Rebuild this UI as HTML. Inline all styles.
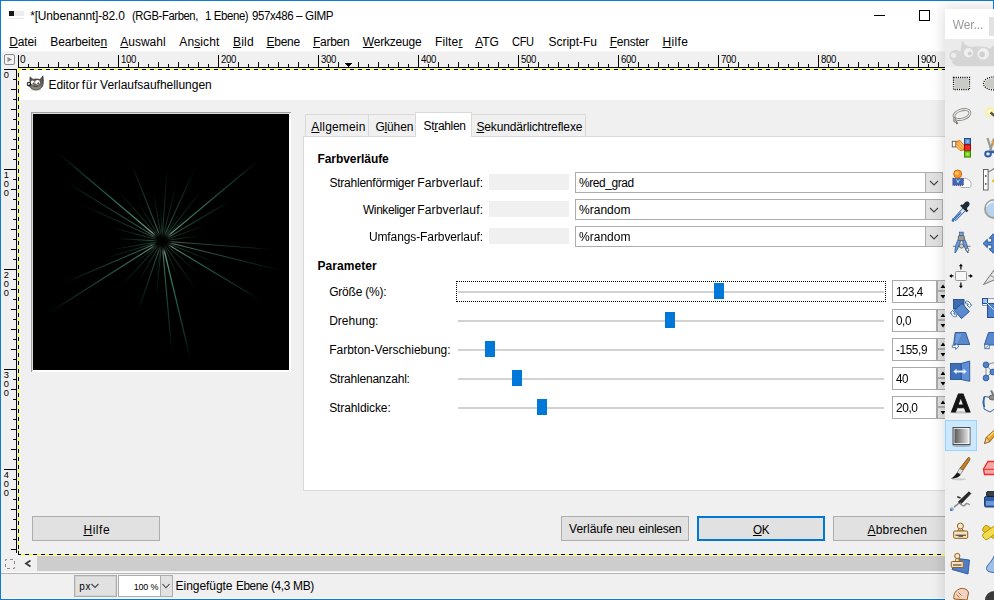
<!DOCTYPE html>
<html lang="de"><head><meta charset="utf-8"><title>GIMP – Editor für Verlaufsaufhellungen</title>
<style>
html,body{margin:0;padding:0;width:994px;height:600px;overflow:hidden;background:#fff;
 font-family:"Liberation Sans",sans-serif;font-size:12px;color:#000}
.a{position:absolute;box-sizing:border-box}
.t{position:absolute;white-space:nowrap;line-height:16px;z-index:5;transform-origin:0 50%}
.t u{text-decoration:underline}
svg{position:absolute;overflow:visible}
.btn{background:#e1e1e1;border:1px solid #adadad}
.hd{background-image:repeating-linear-gradient(90deg,#000 0,#000 4px,#ff0 4px,#ff0 8px)}
.vd{background-image:repeating-linear-gradient(180deg,#000 0,#000 4px,#ff0 4px,#ff0 8px)}
.trk{height:2px;background:#d2d2d2;left:458px;width:426px}
.thb{width:10px;height:16px;background:#0078d7}
.spin{left:892px;width:45px;height:23px;background:#fff;border:1px solid #ababab}
.cmb{left:575px;width:368px;height:21px;background:#fff;border:1px solid #adadad}
.cbt{left:925px;width:18px;height:21px;background:#e1e1e1;border:1px solid #adadad}
.gbx{left:489px;width:80px;height:16px;background:#f0f0f0}
</style></head><body>

<!-- main window frame -->
<div class="a" style="left:0;top:0;width:994px;height:1px;background:#0d7bd8"></div>
<div class="a" style="left:0;top:0;width:1px;height:600px;background:#0d7bd8"></div>
<div class="a" style="left:993px;top:0;width:1px;height:600px;background:#0d7bd8"></div>
<div class="a" style="left:0;top:599px;width:994px;height:1px;background:#0d7bd8"></div>
<!-- title icon + window buttons -->
<div class="a" style="left:9px;top:11px;width:15px;height:5px;background:#ededed"></div>
<div class="a" style="left:9px;top:11px;width:5px;height:5px;background:#161616"></div>
<div class="a" style="left:9px;top:18px;width:15px;height:1px;background:#e6e6e6"></div>
<div class="a" style="left:874px;top:15px;width:11px;height:1px;background:#000"></div>
<div class="a" style="left:919px;top:10px;width:11px;height:11px;border:1px solid #000"></div>
<!-- rulers -->
<div class="a" style="left:1px;top:51px;width:992px;height:18px;background:#f0f0f0"></div>
<div class="a" style="left:1px;top:51px;width:992px;height:1px;background:#f7f7f7"></div>
<div class="a" style="left:1px;top:69px;width:17px;height:486px;background:#f0f0f0"></div>
<svg width="994" height="600" style="left:0;top:0" shape-rendering="crispEdges">
 <path d="M18 67.5H994M18.5 55V67M28.5 64V67M38.5 62V67M48.5 64V67M58.5 62V67M68.5 64V67M78.5 62V67M88.5 64V67M98.5 62V67M108.5 64V67M118.5 55V67M128.5 64V67M138.5 62V67M148.5 64V67M158.5 62V67M168.5 64V67M178.5 62V67M188.5 64V67M198.5 62V67M208.5 64V67M218.5 55V67M228.5 64V67M238.5 62V67M248.5 64V67M258.5 62V67M268.5 64V67M278.5 62V67M288.5 64V67M298.5 62V67M308.5 64V67M318.5 55V67M328.5 64V67M338.5 62V67M348.5 64V67M358.5 62V67M368.5 64V67M378.5 62V67M388.5 64V67M398.5 62V67M408.5 64V67M418.5 55V67M428.5 64V67M438.5 62V67M448.5 64V67M458.5 62V67M468.5 64V67M478.5 62V67M488.5 64V67M498.5 62V67M508.5 64V67M518.5 55V67M528.5 64V67M538.5 62V67M548.5 64V67M558.5 62V67M568.5 64V67M578.5 62V67M588.5 64V67M598.5 62V67M608.5 64V67M618.5 55V67M628.5 64V67M638.5 62V67M648.5 64V67M658.5 62V67M668.5 64V67M678.5 62V67M688.5 64V67M698.5 62V67M708.5 64V67M718.5 55V67M728.5 64V67M738.5 62V67M748.5 64V67M758.5 62V67M768.5 64V67M778.5 62V67M788.5 64V67M798.5 62V67M808.5 64V67M818.5 55V67M828.5 64V67M838.5 62V67M848.5 64V67M858.5 62V67M868.5 64V67M878.5 62V67M888.5 64V67M898.5 62V67M908.5 64V67M918.5 55V67M928.5 64V67M938.5 62V67M948.5 64V67M958.5 62V67M968.5 64V67M978.5 62V67M988.5 64V67" stroke="#000" stroke-width="1" fill="none"/>
 <path d="M16.5 69V553M4 69.5H16M13 79.5H16M11 89.5H16M13 99.5H16M11 109.5H16M13 119.5H16M11 129.5H16M13 139.5H16M11 149.5H16M13 159.5H16M4 169.5H16M13 179.5H16M11 189.5H16M13 199.5H16M11 209.5H16M13 219.5H16M11 229.5H16M13 239.5H16M11 249.5H16M13 259.5H16M4 269.5H16M13 279.5H16M11 289.5H16M13 299.5H16M11 309.5H16M13 319.5H16M11 329.5H16M13 339.5H16M11 349.5H16M13 359.5H16M4 369.5H16M13 379.5H16M11 389.5H16M13 399.5H16M11 409.5H16M13 419.5H16M11 429.5H16M13 439.5H16M11 449.5H16M13 459.5H16M4 469.5H16M13 479.5H16M11 489.5H16M13 499.5H16M11 509.5H16M13 519.5H16M11 529.5H16M13 539.5H16M11 549.5H16" stroke="#000" stroke-width="1" fill="none"/>
 <path d="M344 62.5h9l-4.5 5z" fill="#000"/>
</svg>
<svg width="12" height="12" style="left:3px;top:53px">
 <rect x="1.5" y="1.5" width="10" height="10" rx="1.5" fill="#f4f4f4" stroke="#8c8c8c"/>
 <path d="M4.5 4L9 6.5L4.5 9z" fill="#8a8a8a"/>
</svg>
<!-- canvas: pasted dialog screenshot -->
<div class="a" style="left:18px;top:69px;width:975px;height:486px;background:#f0f0f0"></div>
<div class="a" style="left:19px;top:70px;width:974px;height:30px;background:#fff"></div>
<div class="a hd" style="left:18px;top:69px;width:975px;height:1px;background-position:-4px 0"></div>
<div class="a hd" style="left:18px;top:554px;width:975px;height:1px;background-position:-1px 0"></div>
<div class="a vd" style="left:18px;top:69px;width:1px;height:486px;background-position:0 -4px"></div>
<!-- bottom scrollbar + status -->
<div class="a" style="left:1px;top:555px;width:992px;height:44px;background:#f0f0f0"></div>
<div class="a" style="left:37px;top:556px;width:956px;height:15px;background:#cdcdcd"></div>
<div class="a" style="left:1px;top:572px;width:992px;height:1px;background:#fcfcfc"></div>
<div class="a" style="left:1px;top:573px;width:992px;height:1px;background:#b4b4b4"></div>
<div class="a" style="left:1px;top:598px;width:992px;height:1px;background:#fafafa"></div>
<svg width="40" height="20" style="left:0;top:555px">
 <rect x="5.5" y="4.5" width="9" height="9" fill="none" stroke="#8a8a8a" stroke-dasharray="3 3" stroke-dashoffset="1.5"/>
 <path d="M30.5 5.5L26 8.5L30.5 11.5" fill="none" stroke="#3c3c3c" stroke-width="1.8"/>
</svg>
<div class="a btn" style="left:74px;top:575px;width:43px;height:22px;box-shadow:inset 0 0 0 1px #d2d2d2"></div>
<div class="a" style="left:118px;top:575px;width:55px;height:22px;background:#fff;border:1px solid #adadad"></div>
<div class="a btn" style="left:160px;top:575px;width:13px;height:22px"></div>
<svg width="110" height="10" style="left:74px;top:581px">
 <path d="M17.5 3L21 6.5L24.5 3" fill="none" stroke="#444" stroke-width="1.1"/>
 <path d="M88.5 3L92 6.8L95.5 3" fill="none" stroke="#444" stroke-width="1.1"/>
</svg>
<svg width="20" height="18" style="left:25px;top:74px" viewBox="25 74 20 18"><defs><linearGradient id="wg" x1="0" y1="0" x2="0" y2="1"><stop offset="0" stop-color="#4a4744"/><stop offset=".55" stop-color="#66625a"/><stop offset="1" stop-color="#86827a"/></linearGradient></defs><ellipse cx="36" cy="90" rx="6" ry="1" fill="#000" opacity=".12"/><path d="M30.2 76.8C31 78 32 79 33.300 79.400C35 78.900 37.500 78.900 39.300 79.500C40.800 78.800 42 77.500 42.800 75.900C43.500 79 43.600 83.500 42.600 86C41.300 88.600 38.500 89.900 35.600 89.800C33 89.700 30.800 88.600 29.800 86.600L30 81.500C29.800 80 29.900 78.300 30.200 76.800z" fill="url(#wg)" stroke="#2e2c29" stroke-width=".7"/><path d="M32 87C34 88.700 38.500 88.700 41 86.500" stroke="#a39e92" stroke-width=".9" fill="none" opacity=".8"/><path d="M33.500 86.300h4.500" stroke="#3a3733" stroke-width=".6"/><circle cx="29" cy="84.100" r="2.300" fill="#1b1a19"/><circle cx="28.800" cy="83.900" r="1.150" fill="#e4e4e4"/><ellipse cx="32.700" cy="82.500" rx="1.900" ry="2" fill="#fff"/><ellipse cx="37.500" cy="82.300" rx="2.400" ry="2.300" fill="#fff"/><path d="M32.300 83.600L33.700 82.200L33.900 83.900z" fill="#000"/><path d="M37 83.600L38.600 82.100L38.800 84z" fill="#000"/></svg>
<div class="a" style="left:31px;top:112px;width:260px;height:260px;background:#fff"></div>
<div class="a" style="left:31px;top:112px;width:260px;height:1px;background:#a0a0a0"></div>
<div class="a" style="left:31px;top:112px;width:1px;height:260px;background:#a0a0a0"></div>
<div class="a" style="left:32px;top:113px;width:258px;height:1px;background:#dcdcdc"></div>
<div class="a" style="left:32px;top:113px;width:1px;height:258px;background:#dcdcdc"></div>
<div class="a" style="left:33px;top:114px;width:256px;height:256px;background:#000;overflow:hidden"><svg width="256" height="256" style="left:0;top:0" viewBox="0 0 256 256"><defs><linearGradient id="ry" x1="0" y1="0" x2="1" y2="0"><stop offset="0" stop-color="#cfeee0" stop-opacity="0"/><stop offset=".04" stop-color="#cfeee0" stop-opacity="0"/><stop offset=".1" stop-color="#a8dcc4" stop-opacity=".8"/><stop offset=".22" stop-color="#5fb892" stop-opacity=".8"/><stop offset=".5" stop-color="#34946c" stop-opacity=".72"/><stop offset=".8" stop-color="#226a4e" stop-opacity=".48"/><stop offset="1" stop-color="#12382a" stop-opacity="0"/></linearGradient><radialGradient id="hole"><stop offset="0" stop-color="#000" stop-opacity="1"/><stop offset=".45" stop-color="#000" stop-opacity=".9"/><stop offset="1" stop-color="#000" stop-opacity="0"/></radialGradient><filter id="bl" x="-2%" y="-2%" width="104%" height="104%"><feGaussianBlur stdDeviation=".4"/></filter></defs><g filter="url(#bl)" fill="url(#ry)"><rect x="0" y="-0.65" width="1" height="1.30" opacity="0.92" transform="translate(129 127) rotate(-139.8) scale(139 1)"/><rect x="0" y="-0.55" width="1" height="1.10" opacity="0.55" transform="translate(129 127) rotate(-148.4) scale(117 1)"/><rect x="0" y="-0.51" width="1" height="1.03" opacity="0.41" transform="translate(129 127) rotate(-155.7) scale(90 1)"/><rect x="0" y="-0.55" width="1" height="1.10" opacity="0.55" transform="translate(129 127) rotate(-111.5) scale(87 1)"/><rect x="0" y="-0.51" width="1" height="1.03" opacity="0.41" transform="translate(129 127) rotate(-86) scale(74 1)"/><rect x="0" y="-0.54" width="1" height="1.08" opacity="0.51" transform="translate(129 127) rotate(-65.6) scale(81 1)"/><rect x="0" y="-0.62" width="1" height="1.25" opacity="0.83" transform="translate(129 127) rotate(-39.9) scale(129 1)"/><rect x="0" y="-0.55" width="1" height="1.10" opacity="0.55" transform="translate(129 127) rotate(-30.4) scale(82 1)"/><rect x="0" y="-0.55" width="1" height="1.10" opacity="0.55" transform="translate(129 127) rotate(4.4) scale(115 1)"/><rect x="0" y="-0.59" width="1" height="1.18" opacity="0.69" transform="translate(129 127) rotate(13.9) scale(127 1)"/><rect x="0" y="-0.61" width="1" height="1.23" opacity="0.78" transform="translate(129 127) rotate(31) scale(118 1)"/><rect x="0" y="-0.64" width="1" height="1.27" opacity="0.87" transform="translate(129 127) rotate(76.5) scale(126 1)"/><rect x="0" y="-0.59" width="1" height="1.18" opacity="0.69" transform="translate(129 127) rotate(85) scale(114 1)"/><rect x="0" y="-0.54" width="1" height="1.08" opacity="0.51" transform="translate(129 127) rotate(108.8) scale(78 1)"/><rect x="0" y="-0.60" width="1" height="1.20" opacity="0.74" transform="translate(129 127) rotate(147.6) scale(139 1)"/><rect x="0" y="-0.57" width="1" height="1.15" opacity="0.64" transform="translate(129 127) rotate(156.8) scale(111 1)"/><rect x="0" y="-0.53" width="1" height="1.05" opacity="0.46" transform="translate(129 127) rotate(-177) scale(47 1)"/><rect x="0" y="-0.51" width="1" height="1.03" opacity="0.41" transform="translate(129 127) rotate(170) scale(52 1)"/><rect x="0" y="-0.50" width="1" height="1.00" opacity="0.37" transform="translate(129 127) rotate(-131) scale(70 1)"/><rect x="0" y="-0.50" width="1" height="1.00" opacity="0.37" transform="translate(129 127) rotate(-122) scale(48 1)"/><rect x="0" y="-0.50" width="1" height="1.00" opacity="0.37" transform="translate(129 127) rotate(-100) scale(52 1)"/><rect x="0" y="-0.50" width="1" height="1.00" opacity="0.37" transform="translate(129 127) rotate(-76) scale(60 1)"/><rect x="0" y="-0.51" width="1" height="1.03" opacity="0.41" transform="translate(129 127) rotate(-52) scale(66 1)"/><rect x="0" y="-0.50" width="1" height="1.00" opacity="0.37" transform="translate(129 127) rotate(-45) scale(44 1)"/><rect x="0" y="-0.50" width="1" height="1.00" opacity="0.37" transform="translate(129 127) rotate(-20) scale(50 1)"/><rect x="0" y="-0.50" width="1" height="1.00" opacity="0.37" transform="translate(129 127) rotate(-8) scale(40 1)"/><rect x="0" y="-0.50" width="1" height="1.00" opacity="0.37" transform="translate(129 127) rotate(22) scale(60 1)"/><rect x="0" y="-0.50" width="1" height="1.00" opacity="0.37" transform="translate(129 127) rotate(42) scale(50 1)"/><rect x="0" y="-0.50" width="1" height="1.00" opacity="0.37" transform="translate(129 127) rotate(55) scale(62 1)"/><rect x="0" y="-0.50" width="1" height="1.00" opacity="0.37" transform="translate(129 127) rotate(66) scale(42 1)"/><rect x="0" y="-0.50" width="1" height="1.00" opacity="0.37" transform="translate(129 127) rotate(96) scale(58 1)"/><rect x="0" y="-0.50" width="1" height="1.00" opacity="0.37" transform="translate(129 127) rotate(120) scale(50 1)"/><rect x="0" y="-0.50" width="1" height="1.00" opacity="0.37" transform="translate(129 127) rotate(132) scale(64 1)"/><rect x="0" y="-0.50" width="1" height="1.00" opacity="0.37" transform="translate(129 127) rotate(140) scale(40 1)"/><rect x="0" y="-0.51" width="1" height="1.03" opacity="0.41" transform="translate(129 127) rotate(163) scale(60 1)"/><rect x="0" y="-0.50" width="1" height="1.00" opacity="0.37" transform="translate(129 127) rotate(-165) scale(56 1)"/><rect x="0" y="-0.49" width="1" height="0.98" opacity="0.32" transform="translate(129 127) rotate(-92) scale(36 1)"/><rect x="0" y="-0.49" width="1" height="0.98" opacity="0.32" transform="translate(129 127) rotate(100) scale(36 1)"/><rect x="0" y="-0.49" width="1" height="0.98" opacity="0.32" transform="translate(129 127) rotate(-58) scale(36 1)"/><rect x="0" y="-0.49" width="1" height="0.98" opacity="0.32" transform="translate(129 127) rotate(180) scale(30 1)"/></g><circle cx="129" cy="127" r="11" fill="url(#hole)"/></svg></div>
<div class="a" style="left:303px;top:136px;width:690px;height:355px;background:#fff;border:1px solid #d9d9d9"></div>
<div class="a" style="left:305px;top:114px;width:64px;height:23px;background:#f0f0f0;border:1px solid #d9d9d9;border-bottom:none"></div>
<div class="a" style="left:368px;top:114px;width:49px;height:23px;background:#f0f0f0;border:1px solid #d9d9d9;border-bottom:none"></div>
<div class="a" style="left:471px;top:114px;width:115px;height:23px;background:#f0f0f0;border:1px solid #d9d9d9;border-bottom:none"></div>
<div class="a" style="left:305px;top:136px;width:281px;height:1px;background:#d9d9d9"></div>
<div class="a" style="left:415px;top:112px;width:57px;height:25px;background:#fff;border:1px solid #d9d9d9;border-bottom:none"></div>
<div class="a gbx" style="top:174px"></div>
<div class="a cmb" style="top:172px"></div>
<div class="a cbt" style="top:172px"></div>
<div class="a gbx" style="top:201px"></div>
<div class="a cmb" style="top:199px"></div>
<div class="a cbt" style="top:199px"></div>
<div class="a gbx" style="top:228px"></div>
<div class="a cmb" style="top:226px"></div>
<div class="a cbt" style="top:226px"></div>
<svg width="20" height="80" style="left:924px;top:172px"><path d="M6 9L10 13L14 9" fill="none" stroke="#444" stroke-width="1.1"/><path d="M6 36L10 40L14 36" fill="none" stroke="#444" stroke-width="1.1"/><path d="M6 63L10 67L14 63" fill="none" stroke="#444" stroke-width="1.1"/></svg>
<div class="a trk" style="top:291px"></div>
<div class="a thb" style="left:714px;top:283px"></div>
<div class="a spin" style="top:280px"></div>
<div class="a" style="left:937px;top:280px;width:12px;height:11px;background:#e1e1e1;border:1px solid #adadad"></div>
<div class="a" style="left:937px;top:291px;width:12px;height:12px;background:#e1e1e1;border:1px solid #adadad"></div>
<div class="a trk" style="top:320px"></div>
<div class="a thb" style="left:665px;top:312px"></div>
<div class="a spin" style="top:309px"></div>
<div class="a" style="left:937px;top:309px;width:12px;height:11px;background:#e1e1e1;border:1px solid #adadad"></div>
<div class="a" style="left:937px;top:320px;width:12px;height:12px;background:#e1e1e1;border:1px solid #adadad"></div>
<div class="a trk" style="top:349px"></div>
<div class="a thb" style="left:485px;top:341px"></div>
<div class="a spin" style="top:338px"></div>
<div class="a" style="left:937px;top:338px;width:12px;height:11px;background:#e1e1e1;border:1px solid #adadad"></div>
<div class="a" style="left:937px;top:349px;width:12px;height:12px;background:#e1e1e1;border:1px solid #adadad"></div>
<div class="a trk" style="top:378px"></div>
<div class="a thb" style="left:512px;top:370px"></div>
<div class="a spin" style="top:367px"></div>
<div class="a" style="left:937px;top:367px;width:12px;height:11px;background:#e1e1e1;border:1px solid #adadad"></div>
<div class="a" style="left:937px;top:378px;width:12px;height:12px;background:#e1e1e1;border:1px solid #adadad"></div>
<div class="a trk" style="top:407px"></div>
<div class="a thb" style="left:537px;top:399px"></div>
<div class="a spin" style="top:396px"></div>
<div class="a" style="left:937px;top:396px;width:12px;height:11px;background:#e1e1e1;border:1px solid #adadad"></div>
<div class="a" style="left:937px;top:407px;width:12px;height:12px;background:#e1e1e1;border:1px solid #adadad"></div>
<svg width="12" height="150" style="left:937px;top:280px"><path d="M3.5 8h5l-2.5 -3.5z" fill="#000"/><path d="M3.5 15h5l-2.5 3.5z" fill="#000"/><path d="M3.5 37h5l-2.5 -3.5z" fill="#000"/><path d="M3.5 44h5l-2.5 3.5z" fill="#000"/><path d="M3.5 66h5l-2.5 -3.5z" fill="#000"/><path d="M3.5 73h5l-2.5 3.5z" fill="#000"/><path d="M3.5 95h5l-2.5 -3.5z" fill="#000"/><path d="M3.5 102h5l-2.5 3.5z" fill="#000"/><path d="M3.5 124h5l-2.5 -3.5z" fill="#000"/><path d="M3.5 131h5l-2.5 3.5z" fill="#000"/></svg>
<div class="a" style="left:456px;top:281px;width:430px;height:21px;border:1px dotted #000"></div>
<div class="a btn" style="left:32px;top:516px;width:128px;height:25px"></div>
<div class="a btn" style="left:561px;top:516px;width:128px;height:25px"></div>
<div class="a btn" style="left:697px;top:516px;width:128px;height:25px;border:2px solid #0078d7"></div>
<div class="a btn" style="left:833px;top:516px;width:128px;height:25px"></div>
<div id="txt">
<span class="t" style="left:30.20px;top:8.03px;font-size:12px;letter-spacing:-0.165px;">*[Unbenannt]-82.0</span>
<span class="t" style="left:132.00px;top:8.03px;font-size:12px;letter-spacing:-0.400px;transform:scaleX(0.9352);">(RGB-Farben,</span>
<span class="t" style="left:205.00px;top:8.03px;font-size:12px;letter-spacing:-0.400px;transform:scaleX(0.9511);">1 Ebene)</span>
<span class="t" style="left:251.60px;top:8.03px;font-size:12px;letter-spacing:-0.400px;transform:scaleX(0.9545);">957x486</span>
<span class="t" style="left:296.30px;top:8.03px;font-size:12px;transform:scaleX(0.9809);">–</span>
<span class="t" style="left:305.10px;top:8.03px;font-size:12px;letter-spacing:-0.400px;transform:scaleX(0.9725);">GIMP</span>
<span class="t" style="left:9.30px;top:33.53px;font-size:12px;letter-spacing:-0.168px;"><u>D</u>atei</span>
<span class="t" style="left:50.30px;top:33.53px;font-size:12px;letter-spacing:-0.145px;">Bearbeite<u>n</u></span>
<span class="t" style="left:120.20px;top:33.53px;font-size:12px;letter-spacing:0.014px;"><u>A</u>uswahl</span>
<span class="t" style="left:179.30px;top:33.53px;font-size:12px;letter-spacing:0.098px;">An<u>s</u>icht</span>
<span class="t" style="left:233.00px;top:33.53px;font-size:12px;letter-spacing:0.210px;"><u>B</u>ild</span>
<span class="t" style="left:266.50px;top:33.53px;font-size:12px;letter-spacing:-0.265px;"><u>E</u>bene</span>
<span class="t" style="left:313.00px;top:33.53px;font-size:12px;letter-spacing:-0.277px;"><u>F</u>arben</span>
<span class="t" style="left:362.80px;top:33.53px;font-size:12px;letter-spacing:-0.203px;"><u>W</u>erkzeuge</span>
<span class="t" style="left:435.00px;top:33.53px;font-size:12px;letter-spacing:0.138px;">Filte<u>r</u></span>
<span class="t" style="left:475.20px;top:33.53px;font-size:12px;letter-spacing:-0.118px;"><u>A</u>TG</span>
<span class="t" style="left:512.40px;top:33.53px;font-size:12px;letter-spacing:-0.400px;transform:scaleX(0.9241);">CFU</span>
<span class="t" style="left:548.60px;top:33.53px;font-size:12px;letter-spacing:-0.053px;">Script-Fu</span>
<span class="t" style="left:609.70px;top:33.53px;font-size:12px;letter-spacing:-0.241px;"><u>F</u>enster</span>
<span class="t" style="left:662.50px;top:33.53px;font-size:12px;letter-spacing:0.361px;"><u>H</u>ilfe</span>
<span class="t" style="left:20.30px;top:52.49px;font-size:10px;transform:scaleX(1.0067);">0</span>
<span class="t" style="left:120.50px;top:52.49px;font-size:10px;letter-spacing:-0.400px;transform:scaleX(0.9630);">100</span>
<span class="t" style="left:220.50px;top:52.49px;font-size:10px;letter-spacing:-0.400px;transform:scaleX(0.9630);">200</span>
<span class="t" style="left:320.50px;top:52.49px;font-size:10px;letter-spacing:-0.400px;transform:scaleX(0.9630);">300</span>
<span class="t" style="left:420.50px;top:52.49px;font-size:10px;letter-spacing:-0.400px;transform:scaleX(0.9630);">400</span>
<span class="t" style="left:520.50px;top:52.49px;font-size:10px;letter-spacing:-0.400px;transform:scaleX(0.9630);">500</span>
<span class="t" style="left:620.50px;top:52.49px;font-size:10px;letter-spacing:-0.400px;transform:scaleX(0.9630);">600</span>
<span class="t" style="left:720.50px;top:52.49px;font-size:10px;letter-spacing:-0.400px;transform:scaleX(0.9630);">700</span>
<span class="t" style="left:820.50px;top:52.49px;font-size:10px;letter-spacing:-0.400px;transform:scaleX(0.9630);">800</span>
<span class="t" style="left:920.50px;top:52.49px;font-size:10px;letter-spacing:-0.400px;transform:scaleX(0.9630);">900</span>
<span class="t" style="left:48.50px;top:76.53px;font-size:12px;letter-spacing:-0.080px;">Editor</span>
<span class="t" style="left:81.70px;top:76.53px;font-size:12px;letter-spacing:0.772px;">für</span>
<span class="t" style="left:100.10px;top:76.53px;font-size:12px;letter-spacing:-0.023px;">Verlaufsaufhellungen</span>
<span class="t" style="left:311.30px;top:119.03px;font-size:12px;letter-spacing:0.168px;"><u>A</u>llgemein</span>
<span class="t" style="left:375.40px;top:119.03px;font-size:12px;letter-spacing:-0.152px;">G<u>l</u>ühen</span>
<span class="t" style="left:423.50px;top:118.03px;font-size:12px;letter-spacing:-0.323px;">St<u>r</u>ahlen</span>
<span class="t" style="left:476.40px;top:119.03px;font-size:12px;letter-spacing:-0.142px;"><u>S</u>ekundärlichtreflexe</span>
<span class="t" style="left:317.50px;top:150.63px;font-size:12px;font-weight:bold;letter-spacing:-0.070px;">Farbverläufe</span>
<span class="t" style="left:329.40px;top:174.93px;font-size:12px;letter-spacing:-0.224px;">Strahlenförmiger</span>
<span class="t" style="left:417.20px;top:174.93px;font-size:12px;letter-spacing:0.166px;">Farbverlauf:</span>
<span class="t" style="left:362.60px;top:201.93px;font-size:12px;letter-spacing:-0.400px;transform:scaleX(0.9951);">Winkeliger</span>
<span class="t" style="left:417.20px;top:201.93px;font-size:12px;letter-spacing:0.166px;">Farbverlauf:</span>
<span class="t" style="left:368.90px;top:228.83px;font-size:12px;letter-spacing:-0.099px;">Umfangs-Farbverlauf:</span>
<span class="t" style="left:579.00px;top:175.03px;font-size:12px;letter-spacing:-0.400px;transform:scaleX(0.9935);">%red_grad</span>
<span class="t" style="left:579.00px;top:202.03px;font-size:12px;letter-spacing:0.017px;">%random</span>
<span class="t" style="left:579.00px;top:229.03px;font-size:12px;letter-spacing:0.017px;">%random</span>
<span class="t" style="left:317.50px;top:258.03px;font-size:12px;font-weight:bold;letter-spacing:0.055px;">Parameter</span>
<span class="t" style="left:329.20px;top:284.03px;font-size:12px;letter-spacing:-0.220px;">Größe (%):</span>
<span class="t" style="left:895.90px;top:284.03px;font-size:12px;letter-spacing:-0.400px;transform:scaleX(0.9553);">123,4</span>
<span class="t" style="left:329.20px;top:313.03px;font-size:12px;letter-spacing:-0.016px;">Drehung:</span>
<span class="t" style="left:895.90px;top:313.03px;font-size:12px;letter-spacing:-0.400px;transform:scaleX(0.9731);">0,0</span>
<span class="t" style="left:329.20px;top:342.03px;font-size:12px;">Farbton-Verschiebung:</span>
<span class="t" style="left:895.90px;top:342.03px;font-size:12px;letter-spacing:-0.400px;transform:scaleX(0.9822);">-155,9</span>
<span class="t" style="left:329.20px;top:371.03px;font-size:12px;letter-spacing:-0.188px;">Strahlenanzahl:</span>
<span class="t" style="left:895.90px;top:371.03px;font-size:12px;letter-spacing:-0.400px;transform:scaleX(0.9615);">40</span>
<span class="t" style="left:329.20px;top:400.03px;font-size:12px;letter-spacing:-0.104px;">Strahldicke:</span>
<span class="t" style="left:895.90px;top:400.03px;font-size:12px;letter-spacing:-0.400px;transform:scaleX(0.9910);">20,0</span>
<span class="t" style="left:83.40px;top:522.03px;font-size:12px;letter-spacing:0.561px;"><u>H</u>ilfe</span>
<span class="t" style="left:569.10px;top:521.03px;font-size:12px;letter-spacing:-0.027px;">Verläufe</span>
<span class="t" style="left:615.80px;top:521.03px;font-size:12px;letter-spacing:-0.400px;transform:scaleX(0.9703);">neu</span>
<span class="t" style="left:638.50px;top:521.03px;font-size:12px;letter-spacing:-0.206px;">einlesen</span>
<span class="t" style="left:753.30px;top:521.53px;font-size:12px;letter-spacing:-0.400px;transform:scaleX(0.9765);"><u>O</u>K</span>
<span class="t" style="left:867.50px;top:521.53px;font-size:12px;letter-spacing:0.175px;"><u>A</u>bbrechen</span>
<span class="t" style="left:79.30px;top:578.50px;font-size:10px;letter-spacing:0.538px;">px</span>
<span class="t" style="left:133.70px;top:578.73px;font-size:9px;letter-spacing:-0.178px;">100 %</span>
<span class="t" style="left:175.60px;top:577.73px;font-size:12px;letter-spacing:-0.059px;">Eingefügte</span>
<span class="t" style="left:236.00px;top:577.73px;font-size:12px;letter-spacing:-0.400px;transform:scaleX(0.9776);">Ebene</span>
<span class="t" style="left:271.10px;top:577.73px;font-size:12px;letter-spacing:-0.400px;transform:scaleX(0.9883);">(4,3</span>
<span class="t" style="left:293.10px;top:577.73px;font-size:12px;letter-spacing:-0.400px;">MB)</span>
<span class="t" style="left:952.80px;top:16.53px;font-size:12px;color:#9a9a9a;z-index:20;letter-spacing:-0.133px;">Wer...</span>
<span class="t" style="left:3.70px;top:66.63px;font-size:9.3px;">0</span>
<span class="t" style="left:3.70px;top:166.63px;font-size:9.3px;">1</span>
<span class="t" style="left:3.70px;top:175.73px;font-size:9.3px;">0</span>
<span class="t" style="left:3.70px;top:184.83px;font-size:9.3px;">0</span>
<span class="t" style="left:3.70px;top:266.63px;font-size:9.3px;">2</span>
<span class="t" style="left:3.70px;top:275.73px;font-size:9.3px;">0</span>
<span class="t" style="left:3.70px;top:284.83px;font-size:9.3px;">0</span>
<span class="t" style="left:3.70px;top:366.63px;font-size:9.3px;">3</span>
<span class="t" style="left:3.70px;top:375.73px;font-size:9.3px;">0</span>
<span class="t" style="left:3.70px;top:384.83px;font-size:9.3px;">0</span>
<span class="t" style="left:3.70px;top:466.63px;font-size:9.3px;">4</span>
<span class="t" style="left:3.70px;top:475.73px;font-size:9.3px;">0</span>
<span class="t" style="left:3.70px;top:484.83px;font-size:9.3px;">0</span>
</div>
<div class="a" style="left:945px;top:9px;width:60px;height:600px;background:#f0f0f0;box-shadow:0 0 14px 1px rgba(0,0,0,.15);z-index:8"></div>
<div class="a" style="left:945px;top:9px;width:49px;height:30px;background:#fff;z-index:9"></div>
<div class="a" style="left:989px;top:17px;width:5px;height:19px;background:#e2e2e2;z-index:9"></div>
<div class="a" style="left:945px;top:39px;width:49px;height:28px;background:#ebebeb;z-index:9"></div>
<svg width="994" height="600" style="left:0;top:0;z-index:10;overflow:hidden" viewBox="0 0 994 600"><defs><linearGradient id="bg1" x1="0" x2="1" y1="0" y2="0"><stop offset="0" stop-color="#4a4a4a"/><stop offset="1" stop-color="#f4f4f4"/></linearGradient></defs><g fill="#d5d5d5"><path d="M962 40.5C964 44 967 46.5 971 47C976 45.5 985 46 990 48.5L994 45V66H957C953 65 951.5 62.5 952.5 60.5C949.5 60 948.5 56 950 53C952 49.5 957 49 960.5 51.5C961 47.5 961.5 44 962 40.5z"/></g><circle cx="953.6" cy="55.3" r="2.6" fill="#ececec"/><circle cx="968.6" cy="52.8" r="4.7" fill="#efefef"/><circle cx="983.2" cy="53.8" r="5.8" fill="#efefef"/><circle cx="969.8" cy="53.4" r="2" fill="#d0d0d0"/><circle cx="982" cy="54.4" r="2.8" fill="#d0d0d0"/><rect x="953.5" y="77.5" width="16" height="12" fill="#c9cbc6"/><rect x="953.5" y="77.5" width="16" height="12" fill="none" stroke="#fff" stroke-width="2"/><rect x="953.5" y="77.5" width="16" height="12" fill="none" stroke="#000" stroke-width="1.3" stroke-dasharray="1.1 1.1"/><ellipse cx="994" cy="83.5" rx="10.5" ry="6.5" fill="#c9cbc6"/><ellipse cx="994" cy="83.5" rx="10.5" ry="6.5" fill="none" stroke="#fff" stroke-width="2"/><ellipse cx="994" cy="83.5" rx="10.5" ry="6.5" fill="none" stroke="#000" stroke-width="1.3" stroke-dasharray="1.1 1.1"/><ellipse cx="962" cy="114.5" rx="8.2" ry="4.6" transform="rotate(-17 962 114.5)" fill="none" stroke="#8a8a86" stroke-width="2.8"/><ellipse cx="962" cy="114.5" rx="8.2" ry="4.6" transform="rotate(-17 962 114.5)" fill="none" stroke="#e8e8e4" stroke-width="1.2"/><path d="M955.5 117.5C953.5 119 953.5 121.5 956 121.5L957.5 124" fill="none" stroke="#7c7c78" stroke-width="2.2"/><path d="M955.5 117.5C953.5 119 953.5 121.5 956 121.5" fill="none" stroke="#d8d8d4" stroke-width=".9"/><circle cx="990" cy="112" r="5" fill="#fff27a" opacity=".55"/><circle cx="990" cy="112" r="2.4" fill="#fffbd0"/><path d="M990.5 112.5L996 117" stroke="#555" stroke-width="2.4"/><rect x="952.3" y="141.3" width="3.6" height="5.6" fill="#fff" stroke="#555" stroke-width=".9"/><path d="M956 141.5L960 140.5L965 146.5L964 150L960 150.5L956 146.5z" fill="#f7a23b" stroke="#c46a0a" stroke-width=".8"/><path d="M957.5 143L962 148M959.5 141.5L964 147M956.5 145.5L960.5 150" stroke="#ffe2b0" stroke-width=".7"/><rect x="964.5" y="138.5" width="6" height="6" fill="#5b8bd0" stroke="#1f4b8f"/><rect x="964.5" y="144.8" width="6" height="6" fill="#ef2929" stroke="#a40000"/><rect x="964.5" y="151.1" width="6" height="6" fill="#73d216" stroke="#3f8a07"/><rect x="966.3" y="140.3" width="2.4" height="2.4" fill="#9fc0ee"/><rect x="966.3" y="152.9" width="2.4" height="2.4" fill="#a8ec5a"/><path d="M987.5 138L991.5 151M994 138.5L990 151" stroke="#9a9a96" stroke-width="2.2" fill="none"/><path d="M992 140.5L996 148" stroke="#e9a24a" stroke-width="2"/><ellipse cx="988" cy="154" rx="2.8" ry="2.4" fill="none" stroke="#2e5fa8" stroke-width="2"/><path d="M990 152.5L996 151.5" stroke="#2e5fa8" stroke-width="2.4"/><path d="M961.500 187.500C959.500 187.500 959.500 183.500 962 183.300C961.500 179 966.500 176.500 968.500 180C971.500 180 972 187.500 969.500 187.500z" fill="#fff" stroke="#a4a4a4" stroke-width=".9"/><rect x="952.8" y="178.3" width="10.6" height="7" fill="#3d6cb5"/><rect x="952.8" y="178.3" width="10.6" height="7" fill="none" stroke="#4a1d6e" stroke-width=".9" stroke-dasharray="1 1"/><path d="M956.5 179.5l1.5 3l1.5 -3" stroke="#cfe0ff" stroke-width=".9" fill="none"/><circle cx="957.7" cy="174" r="4" fill="#f79a2e" stroke="#c9650a" stroke-width=".9"/><circle cx="956.8" cy="173" r="1.6" fill="#ffc980"/><rect x="983.5" y="169.5" width="4.6" height="20.5" fill="#fff" stroke="#555" stroke-width=".9"/><path d="M988 172C991 171 993 170 995 167.5" fill="none" stroke="#777" stroke-width="1.1"/><circle cx="985.8" cy="176" r=".9" fill="#555"/><circle cx="985.8" cy="184" r=".9" fill="#555"/><circle cx="993.6" cy="181" r="1.4" fill="#e6b800"/><path d="M953.5 218.5L963.5 207.5L966 210L955.8 220.6z" fill="#dfe9f6" stroke="#2f5f9f" stroke-width="1"/><path d="M954.8 219L961 212.5" stroke="#3b73c0" stroke-width="1.8"/><path d="M961.5 206L964.5 203C966 201 968.5 201.2 969.3 202.8C970 204.3 969.5 206 967.5 207.3L966.2 211z" fill="#1d2a3a"/><path d="M961 205l6.5 6.5" stroke="#1d2a3a" stroke-width="2.4"/><path d="M953 217.8C951.2 219.7 951.2 221.8 953 222C954.8 221.8 954.8 219.7 953 217.8z" fill="#3b73c0"/><circle cx="994" cy="209" r="9" fill="#b9d2ee" stroke="#9d9d9a" stroke-width="1.8"/><path d="M986.5 206.5C988.5 202.5 992 201.2 996 201.8" stroke="#e8f1fb" stroke-width="1.6" fill="none"/><path d="M953 246.3H970.5" stroke="#555" stroke-width=".8"/><path d="M961 236C957 240 955 246 955 253C957.5 250 959 246 960.5 241z" fill="#6f9ad6" stroke="#2f5f9f" stroke-width=".9"/><path d="M962 236C966 240 968 246 968 253C965.5 250 964 246 962.5 241z" fill="#6f9ad6" stroke="#2f5f9f" stroke-width=".9"/><rect x="959.6" y="232.2" width="3.6" height="3.2" fill="#7aa3dc" stroke="#2f5f9f" stroke-width=".8"/><rect x="958.3" y="235.6" width="6" height="5" rx="1" fill="#9c9c98" stroke="#555" stroke-width=".8"/><circle cx="961.5" cy="246" r="2.1" fill="#cfcfcb" stroke="#555" stroke-width=".8"/><circle cx="967.4" cy="249.8" r="1.5" fill="#eee" stroke="#555" stroke-width=".8"/><path d="M983 243.500L987.300 239.300V242H991.700V238.300H989.200L993.200 233.800L997.200 238.300H994.700V248.700H997.200L993.200 253.200L989.200 248.700H991.700V245H987.300V247.700z" fill="#4f83cc" stroke="#2a5596" stroke-width=".9"/><rect x="955.5" y="271.5" width="11" height="9" rx="1" fill="#f6f6f6" stroke="#9a9a9a"/><path d="M960.9 269.500V265M960.9 282.500V287M953.5 275.900H950.500M968.500 275.900H971.500" stroke="#000" stroke-width="1.2"/><path d="M958.9 266.3h4l-2 -2.600zM958.900 285.700h4l-2 2.600zM951.8 273.900v4l-2.600 -2zM970.200 273.900v4l2.600 -2z" fill="#000"/><path d="M983.5 284.500L994 270L996 279z" fill="#e4e4e2" stroke="#6a6a66" stroke-width=".9"/><path d="M990 275L996 279" stroke="#8a8a86" stroke-width="1"/><rect x="953.5" y="299.500" width="10.5" height="9.5" fill="#3b6cb4" stroke="#274f8c" stroke-width=".9"/><rect x="956.5" y="305.5" width="10.5" height="11" transform="rotate(-42 961.7 311)" fill="#5a8ad0" stroke="#274f8c" stroke-width=".9"/><path d="M965.5 301.5C968 300.500 970.500 302 970.600 304.800H971.800L969.500 307.500L966.800 304.800H968.300C968.200 303.600 967 303 965.500 303.300z" fill="#fff" stroke="#2f5f9f" stroke-width=".8"/><path d="M956.500 316.500C954 317.500 951.500 316 951.400 313.200H950.200L952.500 310.500L955.200 313.200H953.700C953.800 314.400 955 315 956.500 314.700z" fill="#fff" stroke="#2f5f9f" stroke-width=".8"/><rect x="982.5" y="298.5" width="14" height="7" fill="none" stroke="#274f8c" stroke-dasharray="1 1"/><rect x="987.5" y="303.500" width="9" height="14" fill="#4f83cc" stroke="#274f8c"/><rect x="982.500" y="298.500" width="5" height="5" fill="#9fc0ee" stroke="#274f8c"/><path d="M985 301L994 310" stroke="#cfe0ff" stroke-width="1"/><path d="M955.2 332.500H965.700L969.700 344.500H953.600z" fill="#5a88cd" stroke="#2a5596" stroke-width=".9"/><path d="M956.5 333.700H961.500L957.500 343.300H955z" fill="#7aa3dc" opacity=".85"/><path d="M952.300 345.200H955.500V343.300L959 346.300L955.500 349.300V347.400H952.300z" fill="#fff" stroke="#2f5f9f" stroke-width=".8"/><path d="M988.5 332.500H997L997 345H984.300z" fill="#5a88cd" stroke="#2a5596" stroke-width=".9"/><rect x="984.800" y="344.300" width="4.400" height="4.400" fill="#fff" stroke="#2f5f9f" stroke-width=".8"/><path d="M988.3 345.300L985.800 347.800" stroke="#2f5f9f" stroke-width=".9"/><path d="M961 363.500L969.700 361V381.300L961 379.500z" fill="#5f8fd4" stroke="#2a5596" stroke-width=".9"/><rect x="950.500" y="363.500" width="10.500" height="16" fill="#3e70ba" stroke="#2a5596" stroke-width=".9"/><path d="M953.3 371.500L956.500 368.700V370.600H963.500V368.700L966.700 371.500L963.500 374.300V372.400H956.500V374.300z" fill="#e8f0fb"/><path d="M986 365L992.500 372L986 377.500zM986 365L996 362" fill="none" stroke="#8a8a86" stroke-width="1"/><circle cx="986" cy="364.800" r="2.900" fill="#4f83cc" stroke="#2a5596" stroke-width=".8"/><circle cx="992.800" cy="372" r="2.900" fill="#4f83cc" stroke="#2a5596" stroke-width=".8"/><circle cx="986" cy="378" r="2.900" fill="#4f83cc" stroke="#2a5596" stroke-width=".8"/><ellipse cx="961" cy="412.300" rx="10" ry="1.300" fill="#000" opacity=".18"/><text x="960.800" y="412" text-anchor="middle" font-family="Liberation Sans,sans-serif" font-weight="bold" font-size="25.5" fill="#141414" stroke="#141414" stroke-width=".9" textLength="20" lengthAdjust="spacingAndGlyphs">A</text><path d="M984 396.500V409L990 412L996 408V398z" fill="#f2f2f0" stroke="#3465a4" stroke-width="1"/><path d="M984.500 397C983 400 983 404 984.500 407" stroke="#3465a4" stroke-width="1.600" fill="none"/><ellipse cx="992.500" cy="397.500" rx="3.500" ry="2.500" fill="#8c8c88" stroke="#555" stroke-width=".8"/><path d="M991 390.500L994 396" stroke="#777" stroke-width="2"/><rect x="945.500" y="420.500" width="31" height="30" fill="#cce8ff" stroke="#99d1ff"/><ellipse cx="961.500" cy="445.700" rx="9.500" ry="1.400" fill="#000" opacity=".22"/><rect x="953" y="427.500" width="17" height="17" fill="url(#bg1)" stroke="#4e4e4c" stroke-width="1"/><rect x="954" y="428.500" width="15" height="15" fill="none" stroke="#fff" stroke-width=".9" opacity=".85"/><path d="M984.500 443.500L986.500 437L994 430.500L996 434L990 441.500z" fill="#e9a330" stroke="#9a5c0a" stroke-width=".9"/><path d="M984.500 443.500L986.500 437L990 441.500z" fill="#e8cf9f" stroke="#9a5c0a" stroke-width=".7"/><path d="M988 437.500L994.500 431.500" stroke="#fce08a" stroke-width="1.200"/><path d="M968.300 457.500C970 457.300 970.300 459 969.500 460.500L962.800 470.500L959.800 468.500z" fill="#c17d28" stroke="#7a4a10" stroke-width=".8"/><path d="M959.800 468.300L963 470.600L960.500 474.600L957.200 472.500z" fill="#dcdcda" stroke="#777" stroke-width=".7"/><path d="M957.200 472.400L960.600 474.700C959 477.500 954.500 478.500 950.800 478.600C953.500 477 955.300 475 957.200 472.400z" fill="#151515"/><ellipse cx="959" cy="479.300" rx="7" ry="1" fill="#000" opacity=".15"/><path d="M983.500 469L988 461.500H997V474.500H984.500z" fill="#f2a7a7" stroke="#ef2929" stroke-width="1.300"/><path d="M983.800 469.300H997" stroke="#ef2929" stroke-width="1"/><path d="M969 491.800L970.800 493.600L960.600 504.200L958.300 502z" fill="#2a2a2a" stroke="#111" stroke-width=".8"/><path d="M959.200 503L954 507.200" stroke="#8a8a8a" stroke-width="1.600"/><path d="M957.200 496.800L960.600 498" stroke="#333" stroke-width="1.600"/><path d="M960.500 502.500C961 506 964 506.500 965.500 504.500C966.500 503 968.500 503.500 969.500 505" fill="none" stroke="#8c8c8a" stroke-width="1.500"/><circle cx="951.800" cy="509.200" r="2" fill="#729fcf" opacity=".8"/><circle cx="951" cy="510" r="1" fill="#3465a4" opacity=".8"/><rect x="984.500" y="496.500" width="12" height="10.500" rx="1.500" fill="#2e5fa8" stroke="#17365f" stroke-width=".9"/><rect x="986" y="501" width="10" height="4.500" fill="#6d9ad8"/><rect x="986.500" y="491.500" width="9" height="5" rx="1.500" fill="#3a3f45" stroke="#15181b" stroke-width=".8"/><path d="M959 528.500H962L963.300 531H957.700z" fill="#e8dcbc" stroke="#9a5c14" stroke-width=".9"/><circle cx="960.400" cy="526" r="3" fill="#f3ead2" stroke="#9a5c14" stroke-width="1"/><rect x="953.700" y="531" width="14" height="7.300" rx="1" fill="#efe5c9" stroke="#9a5c14" stroke-width="1"/><path d="M955.500 535.200H966M958.500 536.200H963" stroke="#3a2a14" stroke-width="1"/><rect x="982" y="527.500" width="18" height="7" rx="2.500" transform="rotate(35 991 532.5) translate(0 1.5)" fill="#e8c628" stroke="#b89204" stroke-width=".9"/><rect x="982" y="527.500" width="18" height="7" rx="2.500" transform="rotate(-35 991 532.5) translate(0 1.5)" fill="#f4dc52" stroke="#b89204" stroke-width=".9"/><path d="M957.500 558.500L969.500 560L968 574L952 569.500z" fill="#4f7ec4" stroke="#2a5596" stroke-width=".9"/><circle cx="957.300" cy="556" r="2.600" fill="#f3ead2" stroke="#9a5c14" stroke-width="1"/><path d="M956 558.500H958.700L959.500 561.500H955z" fill="#e8dcbc" stroke="#9a5c14" stroke-width=".8"/><rect x="951.300" y="561.500" width="12" height="6" rx="1" fill="#efe5c9" stroke="#9a5c14" stroke-width="1"/><path d="M953 565H961.500" stroke="#3a2a14" stroke-width="1"/><path d="M994 556C992 562 986.500 565 986.500 568.500C986.500 571.500 990 572.500 996 572.500V556z" fill="#9fbfe8" stroke="#3465a4" stroke-width="1"/><path d="M954 599C953 594 956 589.500 961 588.500C965 588 968 590 968.500 593L967 600z" fill="#f1d3c4" stroke="#9a5c14" stroke-width="1"/><path d="M956.500 594.500L959.500 597.500M958.500 592.500L961.500 595.500" stroke="#9a5c14" stroke-width=".8"/><circle cx="994" cy="600" r="9" fill="#3a3a3a"/></svg></body></html>
